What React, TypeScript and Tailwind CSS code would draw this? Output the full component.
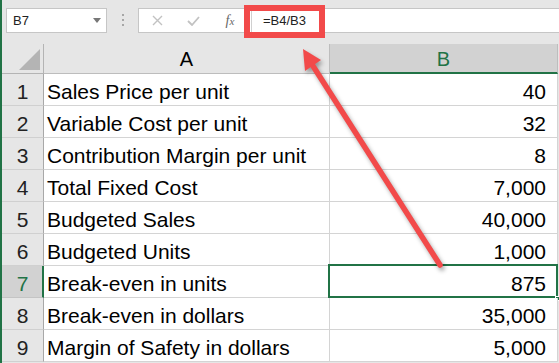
import React from 'react';

const rows: { label: string; value: string }[] = [
  { label: 'Sales Price per unit', value: '40' },
  { label: 'Variable Cost per unit', value: '32' },
  { label: 'Contribution Margin per unit', value: '8' },
  { label: 'Total Fixed Cost', value: '7,000' },
  { label: 'Budgeted Sales', value: '40,000' },
  { label: 'Budgeted Units', value: '1,000' },
  { label: 'Break-even in units', value: '875' },
  { label: 'Break-even in dollars', value: '35,000' },
  { label: 'Margin of Safety in dollars', value: '5,000' },
];

const SELECTED = 7;

export default function App() {
  return (
    <div className="relative w-[559px] h-[363px] overflow-hidden flex bg-[#e6e6e6] font-['Liberation_Sans',Arial,sans-serif] text-black">
      {/* window edge */}
      <div className="w-[2px] shrink-0 bg-[#217346]" />

      <div className="flex-1 flex flex-col min-w-0">
        {/* Name box + formula bar */}
        <div className="h-[44px] shrink-0 flex items-start pt-[8px]">
          <div className="ml-[4px] w-[101px] h-[25px] bg-white border border-[#c6c6c6] flex items-center pl-[6px] pr-[5px]">
            <span className="text-[13px] text-[#222] flex-1">B7</span>
            <span className="w-0 h-0 border-l-[4px] border-r-[4px] border-t-[5px] border-l-transparent border-r-transparent border-t-[#777]" />
          </div>

          <div className="ml-[15px] mt-[6px] flex flex-col gap-[3px]">
            <span className="w-[2px] h-[2px] bg-[#a6a6a6]" />
            <span className="w-[2px] h-[2px] bg-[#a6a6a6]" />
            <span className="w-[2px] h-[2px] bg-[#a6a6a6]" />
          </div>

          <div className="ml-[14px] flex-1 h-[25px] bg-white border-y border-l border-[#c6c6c6] flex items-center">
            <div className="w-[36px] flex justify-center">
              <svg width="11" height="11" viewBox="0 0 11 11">
                <path d="M1 1 L10 10 M10 1 L1 10" stroke="#c2c2c2" strokeWidth="1.4" fill="none" />
              </svg>
            </div>
            <div className="w-[36px] flex justify-center">
              <svg width="13" height="10" viewBox="0 0 13 10">
                <path d="M1 5 L5 9 L12 1" stroke="#c2c2c2" strokeWidth="1.8" fill="none" />
              </svg>
            </div>
            <div className="w-[40px] h-full flex items-center justify-center pr-[2px]">
              <span className="font-['Liberation_Serif',serif] italic text-[14px] text-[#666]">
                f<span className="text-[11px]">x</span>
              </span>
            </div>
            <div className="h-full border-l border-[#d0d0d0] flex items-center pl-[11px]">
              <span className="text-[13px] text-[#222]">=B4/B3</span>
            </div>
          </div>
        </div>

        {/* Column headers */}
        <div className="h-[30px] shrink-0 flex">
          <div className="w-[42px] shrink-0 border-r border-b border-[#b4b4b4] flex items-end justify-end pr-[3px] pb-[3px]">
            <span className="w-0 h-0 border-b-[21px] border-l-[21px] border-b-[#b4b4b4] border-l-transparent" />
          </div>
          <div className="w-[286px] shrink-0 border-r border-b border-[#bdbdbd] flex items-end justify-center pb-[2px]">
            <span className="text-[20px] leading-[24px]">A</span>
          </div>
          <div className="w-[228px] shrink-0 bg-[#d2d2d2] border-r border-r-[#bdbdbd] border-b-2 border-b-[#217346] flex items-end justify-center pb-[1px]">
            <span className="text-[20px] leading-[24px] text-[#217346]">B</span>
          </div>
        </div>

        {/* Rows */}
        <div className="flex flex-col">
          {rows.map((r, i) => {
            const n = i + 1;
            const sel = n === SELECTED;
            return (
              <div key={n} className="h-[32px] shrink-0 flex">
                <div
                  className={
                    sel
                      ? 'w-[42px] shrink-0 bg-[#d2d2d2] border-b border-b-[#c4c4c4] border-r-2 border-r-[#217346] flex items-end justify-center pb-[1px] pl-[1px]'
                      : 'w-[42px] shrink-0 bg-[#e6e6e6] border-b border-b-[#d0d0d0] border-r border-r-[#a8a8a8] flex items-end justify-center pb-[1px]'
                  }
                >
                  <span className={sel ? 'text-[21px] leading-[24px] text-[#217346]' : 'text-[21px] leading-[24px] text-[#222]'}>
                    {n}
                  </span>
                </div>
                <div className="w-[286px] shrink-0 bg-white border-r border-b border-[#d4d4d4] flex items-end pl-[3px] pb-[1px] whitespace-nowrap overflow-visible">
                  <span className="text-[21px] leading-[24px]">{r.label}</span>
                </div>
                <div className="relative w-[228px] shrink-0 bg-white border-r border-b border-[#d4d4d4] flex items-end justify-end pr-[11px] pb-[1px]">
                  <span className="text-[21px] leading-[24px]">{r.value}</span>
                  {sel && (
                    <>
                      <div className="absolute -left-[2px] -top-[2px] -right-[1px] -bottom-[1px] border-2 border-[#217346]" />
                      <div className="absolute -right-[3px] -bottom-[4px] w-[5px] h-[5px] bg-[#217346] border border-white" />
                    </>
                  )}
                </div>
              </div>
            );
          })}
        </div>
      </div>

      {/* Annotation: red box round the formula */}
      <div className="absolute left-[244px] top-[5px] w-[81px] h-[33px] border-[6px] border-[#f24a4a]" />

      {/* Annotation: arrow */}
      <svg
        className="absolute left-0 top-0 drop-shadow-[2px_3px_2px_rgba(0,0,0,0.35)]"
        width="559"
        height="363"
        viewBox="0 0 559 363"
      >
        <line x1="440" y1="265" x2="313" y2="66" stroke="#f24a4a" strokeWidth="5.5" strokeLinecap="round" />
        <polygon points="303,49 321,60 305,71" fill="#f24a4a" />
      </svg>
    </div>
  );
}
